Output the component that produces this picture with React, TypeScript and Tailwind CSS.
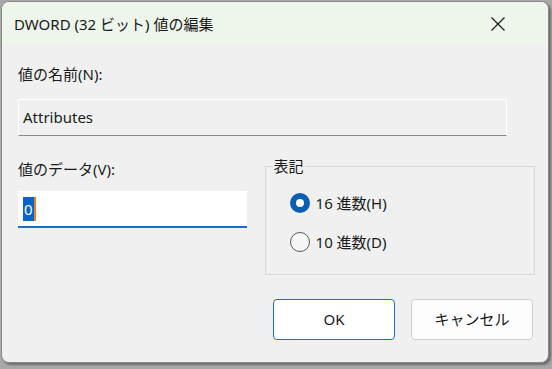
import React from "react";

const font = { fontFamily: '"Noto Sans", "Noto Sans CJK JP", sans-serif' };

export default function App() {
    return (
        <div className="w-[552px] h-[369px] bg-[#a8a8a8] pt-[1px] pl-[1px] overflow-hidden" style={font}>
            <div className="w-[548px] h-[362px] bg-[#f0f0f0] rounded-lg border border-[#8a8a8a] overflow-hidden shadow-[2px_2px_2px_rgba(0,0,0,0.35)] flex flex-col text-[#1a1a1a]">
                <div className="h-[43px] bg-[#eef6ec] flex items-center justify-between pl-[12px] pr-[42px] shrink-0">
                    <span className="text-[15px] leading-none pt-[1px]">DWORD (32 ビット) 値の編集</span>
                    <svg width="16" height="16" viewBox="0 0 16 16" className="text-[#1a1a1a]">
                        <path d="M1.5 1.5 L14.5 14.5 M14.5 1.5 L1.5 14.5" stroke="currentColor" strokeWidth="1.2" />
                    </svg>
                </div>
                <div className="px-[15px] pt-[19px] flex flex-col">
                    <div className="text-[15px] leading-[20px] h-[20px] pl-[1px]">値の名前(N):</div>
                    <div className="mt-[15px] ml-[1px] h-[37px] w-[489px] border border-white border-b-[#8a8a8a] flex items-center pl-[4px] text-[15px]">
                        Attributes
                    </div>
                    <div className="flex mt-[20px]">
                        <div className="w-[249px] flex flex-col pl-[1px]">
                            <div className="text-[15px] leading-[20px] h-[20px] mt-[3px]">値のデータ(V):</div>
                            <div className="mt-[12px] h-[37px] w-[229px] bg-white border-b-2 border-[#1c6fc3] flex items-center pl-[5px]">
                                <span className="bg-[#0a64c8] text-white text-[15px] leading-[24px] px-[1px] border-r-2 border-[#e2861d]">0</span>
                            </div>
                        </div>
                        <div className="w-[270px] h-[119px] relative">
                            <div className="absolute left-0 top-[10px] w-[270px] h-[109px] border border-[#d8d8d8]" />
                            <span className="absolute left-[8px] top-0 px-[1px] bg-[#f0f0f0] text-[15px] leading-[20px]">表記</span>
                            <div className="absolute left-[25px] top-[37px] flex flex-col gap-[19px]">
                                <div className="flex items-center gap-[6px] h-[20px]">
                                    <span className="w-[20px] h-[20px] rounded-full bg-[#0a5fb4] flex items-center justify-center">
                                        <span className="w-[8px] h-[8px] rounded-full bg-white" />
                                    </span>
                                    <span className="text-[15px] leading-[20px]">16 進数(H)</span>
                                </div>
                                <div className="flex items-center gap-[6px] h-[20px]">
                                    <span className="w-[20px] h-[20px] rounded-full border border-[#5a5a5a] bg-[#f7f7f7]" />
                                    <span className="text-[15px] leading-[20px]">10 進数(D)</span>
                                </div>
                            </div>
                        </div>
                    </div>
                    <div className="flex justify-end gap-[16px] mt-[24px]">
                        <button className="w-[122px] h-[41px] bg-white border border-[#1c6fc3] rounded-[4px] text-[15px]">OK</button>
                        <button className="w-[122px] h-[41px] bg-[#fdfdfd] border border-[#d0d0d0] rounded-[4px] text-[15px]">キャンセル</button>
                    </div>
                </div>
            </div>
        </div>
    );
}
